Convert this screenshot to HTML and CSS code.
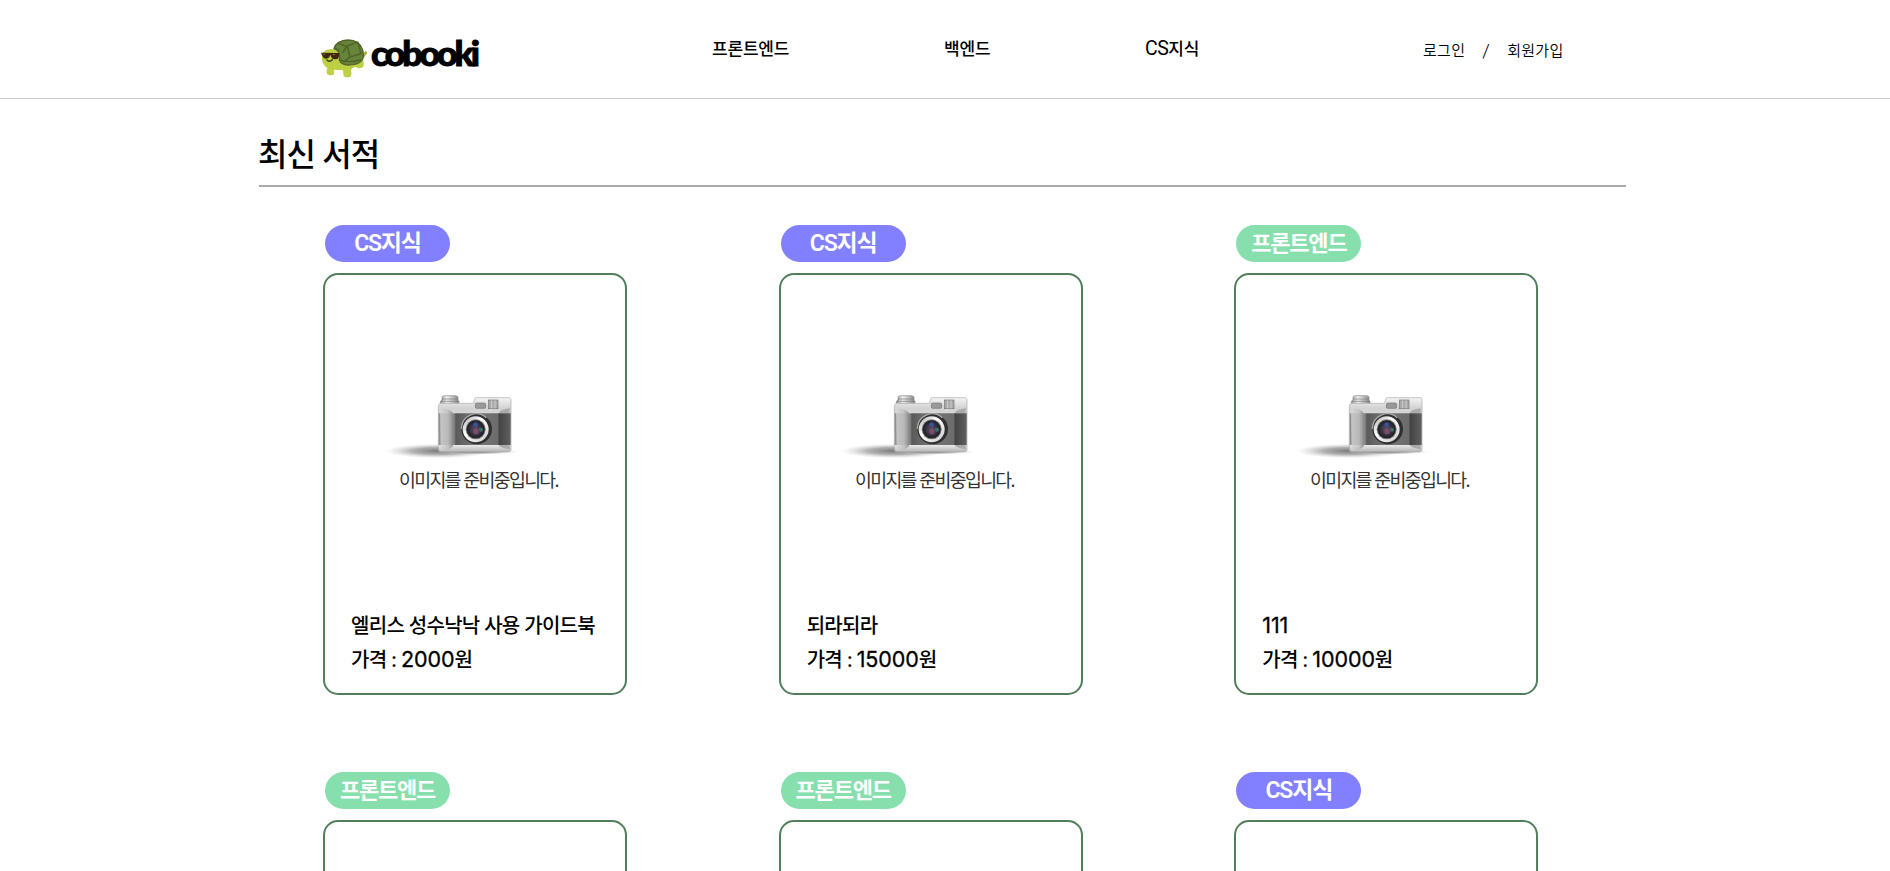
FILE: index.html
```html
<!DOCTYPE html>
<html lang="ko">
<head>
<meta charset="utf-8">
<title>cobooki</title>
<link rel="stylesheet" href="styles.css">
</head>
<body>
<svg class="defs" width="0" height="0" aria-hidden="true">
  <defs>
    <linearGradient id="silver" x1="0" y1="0" x2="0" y2="1"><stop offset="0" stop-color="#f4f4f4"/><stop offset=".2" stop-color="#d2d2d2"/><stop offset=".85" stop-color="#f6f6f6"/><stop offset="1" stop-color="#b5b5b5"/></linearGradient>
    <linearGradient id="grip" x1="0" y1="0" x2="1" y2="0"><stop offset="0" stop-color="#8b8b8b"/><stop offset=".18" stop-color="#b9b9b9"/><stop offset=".24" stop-color="#5a5a5a"/><stop offset=".5" stop-color="#777"/><stop offset=".82" stop-color="#6c6c6c"/><stop offset=".84" stop-color="#444"/><stop offset="1" stop-color="#606060"/></linearGradient>
    <linearGradient id="side" x1="0" y1="0" x2="1" y2="0"><stop offset="0" stop-color="#d8d8d8"/><stop offset=".6" stop-color="#bdbdbd"/><stop offset="1" stop-color="#777"/></linearGradient>
    <linearGradient id="knob" x1="0" y1="0" x2="1" y2="0"><stop offset="0" stop-color="#999"/><stop offset=".35" stop-color="#f2f2f2"/><stop offset="1" stop-color="#858585"/></linearGradient>
    <linearGradient id="ring" x1="0" y1="0" x2="1" y2="1"><stop offset="0" stop-color="#aaa"/><stop offset=".4" stop-color="#fff"/><stop offset="1" stop-color="#ccc"/></linearGradient>
    <radialGradient id="glass"><stop offset="0" stop-color="#6d5069"/><stop offset=".5" stop-color="#3f3a4c"/><stop offset="1" stop-color="#1b1b1f"/></radialGradient>
    <radialGradient id="shade"><stop offset="0" stop-color="#777"/><stop offset=".5" stop-color="#999" stop-opacity=".75"/><stop offset="1" stop-color="#ccc" stop-opacity="0"/></radialGradient>
    <symbol id="no-image" viewBox="0 0 660 360">
      <ellipse cx="205" cy="210" rx="160" ry="22" fill="url(#shade)"/>
      <ellipse cx="320" cy="212" rx="125" ry="9" fill="url(#shade)"/>
      <path d="M216 49q0-5 8-5h32q8 0 8 5v9l3 3v8h-56v-8l5-3z" fill="url(#knob)" stroke="#888" stroke-width="2"/>
      <path d="M216 54h48M212 61h54" stroke="#777" stroke-width="2"/>
      <path d="M205 76q0-9 9-9h96l6-17h101q6 0 6 7v148q0 7-7 7H212q-7 0-7-7z" fill="url(#silver)" stroke="#aaa" stroke-width="2"/>
      <path d="M206 97h216v95H206z" fill="url(#grip)"/>
      <path d="M210 80q34 5 40 18v93q-3 15-38 18z" fill="url(#side)" opacity=".75"/>
      <path d="M386 96q4-10 33-14v14M386 192q4 9 33 13v-13" fill="#aaa"/>
      <rect x="316" y="66" width="31" height="16" rx="4" fill="#999" stroke="#777" stroke-width="2"/>
      <rect x="355" y="57" width="29" height="26" fill="#aaa" stroke="#777" stroke-width="2"/>
      <path d="M365 58v24M375 58v24" stroke="#ccc" stroke-width="3"/>
      <circle cx="320" cy="144" r="46" fill="#303030"/>
      <path d="M274 143a45 45 0 0 1 75-33" fill="none" stroke="#aaa" stroke-width="4"/>
      <circle cx="317" cy="145" r="39" fill="url(#ring)"/>
      <circle cx="317" cy="145" r="30" fill="#777"/>
      <circle cx="317" cy="145" r="27" fill="url(#glass)"/>
      <circle cx="317" cy="131" r="7" fill="#3b5299"/><circle cx="333" cy="146" r="6" fill="#397467"/><circle cx="318" cy="152" r="8" fill="#8f4f72" opacity=".7"/>
      <text class="no-image-text" x="87" y="317" textLength="482" lengthAdjust="spacing">이미지를 준비중입니다.</text>
    </symbol>
  </defs>
</svg>

<header class="header">
  <a class="logo">
    <svg class="logo-art" viewBox="54 21 492 183" role="img" aria-label="cobooki">
      <path d="M181 105q10-3 15-11q7-1 4 7q-6 11-13 13z" fill="#a3ad34"/>
      <path d="M66 107q2-20 30-20q24 0 30 28q10 18 35 19l29-13q4 20-4 22q-14 4-20-3q-10 3-13 10q3 17-2 20q-11 5-20-1l-2-18-28-2q3 15-3 16q-10 2-17-3q-3-9 1-18q-19-12-16-37z" fill="#bdcf43"/>
      <path d="M102 86q8-25 42-26q34 0 44 30q5 22-2 31q-12 14-42 14q-20 0-26-15q6-27-16-34z" fill="#67853a" stroke="#53662a" stroke-width="4"/>
      <path d="M112 69l28 10 33-13M140 79l-12 20M142 80l8 31M173 66l10 35M150 111l-20 16M150 111l33-10M104 85l14 6" fill="none" stroke="#53662a" stroke-width="5"/>
      <path d="M119 119q20 11 64 1" fill="none" stroke="#4f6228" stroke-width="4"/>
      <path d="M63 98l55 1-2 14q-3 5-12 5-10 0-12-12h-2q-2 10-11 10-9 0-12-9z" fill="#40280f"/>
      <path d="M70 103h5M98 104h6" stroke="#8d6338" stroke-width="4"/>
      <path d="M81 120q7 8 16-1" fill="none" stroke="#3c3719" stroke-width="4" stroke-linecap="round"/>
      <text class="logo-text" x="213" y="139" textLength="318" lengthAdjust="spacingAndGlyphs">cobooki</text>
    </svg>
  </a>
  <nav class="nav">
    <a class="nav-link">프론트엔드</a>
    <a class="nav-link">백엔드</a>
    <a class="nav-link"><span class="latin">CS</span>지식</a>
  </nav>
  <div class="auth"><a>로그인</a><span class="slash">/</span><a>회원가입</a></div>
</header>

<main class="main">
  <h1 class="title">최신 서적</h1>
  <section class="books">
    <article class="book">
      <span class="badge badge-cs">CS지식</span>
      <div class="card">
        <svg class="picture"><use href="#no-image"/></svg>
        <p class="name">엘리스 성수낙낙 사용 가이드북</p>
        <p class="price">가격 : <span class="digits">2000</span>원</p>
      </div>
    </article>
    <article class="book">
      <span class="badge badge-cs">CS지식</span>
      <div class="card">
        <svg class="picture"><use href="#no-image"/></svg>
        <p class="name">되라되라</p>
        <p class="price">가격 : <span class="digits">15000</span>원</p>
      </div>
    </article>
    <article class="book">
      <span class="badge badge-front">프론트엔드</span>
      <div class="card">
        <svg class="picture"><use href="#no-image"/></svg>
        <p class="name"><span class="digits">111</span></p>
        <p class="price">가격 : <span class="digits">10000</span>원</p>
      </div>
    </article>
    <article class="book">
      <span class="badge badge-front">프론트엔드</span>
      <div class="card"></div>
    </article>
    <article class="book">
      <span class="badge badge-front">프론트엔드</span>
      <div class="card"></div>
    </article>
    <article class="book">
      <span class="badge badge-cs">CS지식</span>
      <div class="card"></div>
    </article>
  </section>
</main>
</body>
</html>
```
FILE: styles.css
```css
* { box-sizing: border-box; }
body {
  margin: 0;
  height: 871px;
  overflow: hidden;
  background: #fff;
  color: #000;
  font-family: Roboto, "Noto Sans CJK KR", sans-serif;
}
.defs { position: absolute; }
.header {
  display: flex;
  height: 99px;
  padding-left: 318px;
  border-bottom: 1px solid #ccc;
}
.logo { width: 394px; padding-top: 27px; }
.logo-art { display: block; width: 164px; height: 61px; }
.logo-text { font-family: Lato, sans-serif; font-size: 104px; font-weight: 900; letter-spacing: -9px; stroke: #000; stroke-width: 3px; }
.nav {
  display: grid;
  grid-template-columns: 232px 201px 278px;
  padding-top: 36px;
  font-size: 17px;
  line-height: 26px;
  font-weight: 500;
  letter-spacing: -0.2px;
  white-space: nowrap;
}
.latin { font-size: 19.5px; font-weight: 400; letter-spacing: -0.5px; }
.auth {
  display: flex;
  gap: 17px;
  padding-top: 38px;
  font-size: 15px;
  line-height: 26px;
  font-weight: 350;
  letter-spacing: 0.3px;
  white-space: nowrap;
}
.slash { font-size: 19px; }
.main { width: 1367px; margin-left: 259px; }
.title {
  height: 88px;
  margin: 0;
  padding-top: 32px;
  border-bottom: 2px solid #aaa;
  font-size: 32px;
  line-height: 48px;
  font-weight: 500;
  letter-spacing: -0.9px;
  text-indent: -1px;
}
.books {
  display: grid;
  grid-template-columns: repeat(3, 1fr);
  row-gap: 77px;
  height: 684px;
  overflow: hidden;
  padding: 38px 0 0;
}
.book { padding-left: 64px; }
.badge {
  display: block;
  width: 125px;
  height: 37px;
  margin: 0 0 11px 2px;
  border-radius: 19px;
  color: #fff;
  font-size: 22px;
  line-height: 37px;
  font-weight: 700;
  letter-spacing: -1.2px;
  text-align: center;
}
.badge-cs { background: #8280ff; font-size: 23px; font-weight: 600; }
.badge-front { background: #87dfad; }
.card {
  width: 304px;
  height: 422px;
  padding: 106px 0 0 26px;
  border: 2px solid #517f5b;
  border-radius: 15px;
}
.picture { display: block; width: 220px; height: 120px; margin: 0 0 108px 19px; }
.no-image-text { font-family: "Noto Sans CJK KR", sans-serif; font-size: 55px; font-weight: 400; fill: #333; }
.name, .price {
  margin: 0;
  font-family: Inter, "Noto Sans CJK KR", sans-serif;
  font-size: 20px;
  line-height: 34px;
  font-weight: 500;
  letter-spacing: -0.7px;
  white-space: nowrap;
}
.digits { font-size: 21.5px; font-weight: 400; letter-spacing: -0.1px; -webkit-text-stroke: 0.3px #000; line-height: 1; }
```
